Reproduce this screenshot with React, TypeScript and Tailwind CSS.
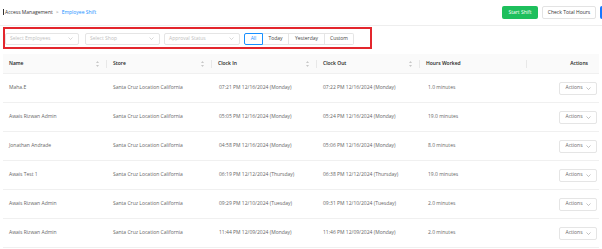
import React from 'react';

const rows = [
  { name: 'Maha.E', inT: '07:21 PM 12/16/2024 (Monday)', outT: '07:22 PM 12/16/2024 (Monday)', hours: '1.0 minutes' },
  { name: 'Awais Rizwan Admin', inT: '05:05 PM 12/16/2024 (Monday)', outT: '05:24 PM 12/16/2024 (Monday)', hours: '19.0 minutes' },
  { name: 'Jonathan Andrade', inT: '04:58 PM 12/16/2024 (Monday)', outT: '05:06 PM 12/16/2024 (Monday)', hours: '8.0 minutes' },
  { name: 'Awais Test 1', inT: '06:19 PM 12/12/2024 (Thursday)', outT: '06:38 PM 12/12/2024 (Thursday)', hours: '19.0 minutes' },
  { name: 'Awais Rizwan Admin', inT: '09:29 PM 12/10/2024 (Tuesday)', outT: '09:31 PM 12/10/2024 (Tuesday)', hours: '2.0 minutes' },
  { name: 'Awais Rizwan Admin', inT: '11:44 PM 12/09/2024 (Monday)', outT: '11:46 PM 12/09/2024 (Monday)', hours: '2.0 minutes' },
];

const Chevron = ({ className = '' }: { className?: string }) => (
  <svg width="5" height="3" viewBox="0 0 10 6" className={className}>
    <path d="M1 1l4 4 4-4" fill="none" stroke="currentColor" strokeWidth="1.2" />
  </svg>
);

const Sort = () => (
  <svg width="3" height="6" viewBox="0 0 6 12" className="text-[#c8c8c8]">
    <path d="M3 0L6 4H0z M3 12L0 8h6z" fill="currentColor" />
  </svg>
);

const Select = ({ label, w }: { label: string; w: string }) => (
  <div className={`${w} h-[12px] border border-[#e5e5e5] rounded-[2px] flex items-center justify-between pl-[4px] pr-[5px] text-[#c0c0c0]`}>
    <span className="text-[5px]">{label}</span>
    <Chevron />
  </div>
);

const HeadCell = ({ label, sort = true, divider = true }: { label: string; sort?: boolean; divider?: boolean }) => (
  <div className="flex items-center h-full pl-[6px]">
    <span className="flex-1 text-[#222] font-semibold">{label}</span>
    {sort && <span className="mr-[7px] flex"><Sort /></span>}
    {divider && <span className="w-px h-[8px] bg-[#e8e8e8]" />}
  </div>
);

export default function App() {
  const grid = 'grid grid-cols-[104px_105px_105px_103px_107px_1fr]';
  return (
    <div className="w-[602px] h-[249px] bg-white overflow-hidden text-[5px] text-[#666]" style={{ fontFamily: '"Open Sans", Lato, sans-serif' }}>
      {/* top bar */}
      <div className="h-[26px] flex items-center border-b border-[#eeeeee] pl-[3px]">
        <div className="flex-1 flex items-center gap-[3px] text-[5px]">
          <span className="text-[#333]"><span className="border-l border-[#333] pr-[1px]" />Access Management</span>
          <span className="text-[#888]">&gt;</span>
          <span className="text-[#1890ff]">Employee Shift</span>
        </div>
        <div className="flex items-center gap-[4px] mr-[-40px]">
          <button className="w-[36px] h-[13px] bg-[#1dbf5c] text-white rounded-[2px] text-[5px] font-medium">Start Shift</button>
          <button className="w-[54px] h-[13px] bg-white border border-[#e3e3e3] text-[#333] rounded-[2px] text-[5px]">Check Total Hours</button>
          <button className="w-[42px] h-[13px] bg-[#1677ff] rounded-[2px]" />
        </div>
      </div>

      {/* filters */}
      <div className="mt-px ml-[3px] w-[369px] h-[22px] border-2 border-[#e3262d] flex items-center">
        <div className="mt-[1px] flex items-center">
          <Select label="Select Employees" w="w-[74px]" />
          <div className="w-[6px]" />
          <Select label="Select Shop" w="w-[75px]" />
          <div className="w-[4px]" />
          <Select label="Approval Status" w="w-[76px]" />
          <div className="w-[4px]" />
          <div className="flex h-[12px] text-[5px] text-[#444]">
            <div className="w-[19px] border border-[#1890ff] text-[#1890ff] rounded-l-[2px] flex items-center justify-center">All</div>
            <div className="w-[26px] border-y border-r border-[#e5e5e5] flex items-center justify-center">Today</div>
            <div className="w-[36px] border-y border-r border-[#e5e5e5] flex items-center justify-center">Yesterday</div>
            <div className="w-[29px] border-y border-r border-[#e5e5e5] rounded-r-[2px] flex items-center justify-center">Custom</div>
          </div>
        </div>
      </div>

      {/* table */}
      <div className="mt-[5px] mx-[3px]">
        <div className={`${grid} h-[20px] bg-[#fafafa] border-b border-[#f0f0f0]`}>
          <HeadCell label="Name" />
          <HeadCell label="Store" />
          <HeadCell label="Clock In" />
          <HeadCell label="Clock Out" />
          <HeadCell label="Hours Worked" sort={false} />
          <div className="flex items-center justify-end pr-[11px] text-[#222] font-semibold">Actions</div>
        </div>
        {rows.map((r, i) => (
          <div key={i} className={`${grid} h-[29px] border-b border-[#f0f0f0] items-center`}>
            <div className="pl-[6px]">{r.name}</div>
            <div className="pl-[6px]">Santa Cruz Location California</div>
            <div className="pl-[7px]">{r.inT}</div>
            <div className="pl-[6px]">{r.outT}</div>
            <div className="pl-[8px]">{r.hours}</div>
            <div className="flex justify-end pr-[2px]">
              <div className="w-[38px] h-[13px] border border-[#e5e5e5] rounded-[2px] flex items-center justify-center gap-[3px] text-[#666]">
                <span>Actions</span>
                <Chevron className="text-[#999]" />
              </div>
            </div>
          </div>
        ))}
      </div>
    </div>
  );
}
